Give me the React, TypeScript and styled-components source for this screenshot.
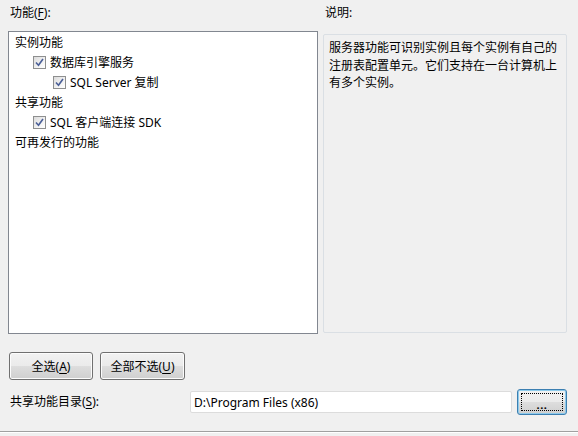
import styled, { createGlobalStyle } from 'styled-components'

type Feature = {
  label: string
  depth: number
  checkable: boolean
}

const features: Feature[] = [
  { label: '实例功能', depth: 0, checkable: false },
  { label: '数据库引擎服务', depth: 1, checkable: true },
  { label: 'SQL Server 复制', depth: 2, checkable: true },
  { label: '共享功能', depth: 0, checkable: false },
  { label: 'SQL 客户端连接 SDK', depth: 1, checkable: true },
  { label: '可再发行的功能', depth: 0, checkable: false },
]

const GlobalStyle = createGlobalStyle`
  html, body {
    margin: 0;
    padding: 0;
    background: #f0f0f0;
  }
  * {
    box-sizing: border-box;
  }
`

const Page = styled.div`
  width: 578px;
  height: 436px;
  padding: 0 11px 0 8px;
  background: #f0f0f0;
  color: #000;
  font-family: 'Noto Sans', 'Noto Sans CJK SC', sans-serif;
  font-size: 12px;
  display: flex;
  flex-direction: column;
  overflow: hidden;
`

const Columns = styled.div`
  display: grid;
  grid-template-columns: 310px 244px;
  column-gap: 5px;
`

const Column = styled.div`
  display: flex;
  flex-direction: column;
`

const Caption = styled.div<{ $indent?: number }>`
  height: 31px;
  padding-top: 4px;
  padding-left: ${({ $indent }) => $indent ?? 2}px;
  line-height: 18px;
`

const Key = styled.span`
  text-decoration: underline;
  text-underline-offset: 2px;
`

const Tree = styled.div`
  height: 303px;
  background: #fff;
  border: 1px solid #828790;
  display: flex;
  flex-direction: column;
`

const TreeRow = styled.div<{ $depth: number }>`
  height: 20px;
  display: flex;
  align-items: center;
  padding-left: ${({ $depth }) => ($depth === 0 ? 6 : 4 + $depth * 20)}px;
  white-space: nowrap;
`

const Box = styled.span`
  width: 13px;
  height: 13px;
  margin-right: 4px;
  border: 1px solid #8e8f8f;
  background: linear-gradient(135deg, #dcdcdc 0%, #f6f6f6 70%, #ffffff 100%);
  display: flex;
  align-items: center;
  justify-content: center;
  flex: none;
`

const Description = styled.div`
  margin-top: 3px;
  height: 299px;
  border: 1px solid #dadfe4;
  border-radius: 2px;
  padding: 4px 5px;
  line-height: 17.5px;
  background: #f0f0f0;
`

const ButtonRow = styled.div`
  margin-top: 18px;
  padding-left: 1px;
  display: flex;
  gap: 7px;
`

const Button = styled.button<{ $width: number; $height?: number; $focused?: boolean }>`
  width: ${({ $width }) => $width}px;
  height: ${({ $height }) => $height ?? 28}px;
  padding: 0;
  border: 1px solid ${({ $focused }) => ($focused ? '#3c7fb1' : '#707070')};
  border-radius: 3px;
  background: linear-gradient(#f2f2f2 0%, #ebebeb 48%, #dddddd 52%, #cfcfcf 100%);
  box-shadow: ${({ $focused }) => ($focused ? 'inset 0 0 0 1px #8ecbec' : 'inset 0 0 0 1px #fcfcfc')};
  font-family: inherit;
  font-size: 12px;
  color: #000;
  display: flex;
  align-items: center;
  justify-content: center;
`

const FocusRing = styled.span`
  width: calc(100% - 6px);
  height: calc(100% - 6px);
  border: 1px dotted #000;
  display: flex;
  align-items: center;
  justify-content: center;
  padding-top: 4px;
  font-size: 11px;
  font-weight: 700;
  letter-spacing: 0.5px;
`

const DirRow = styled.div`
  margin-top: 9px;
  height: 26px;
  display: flex;
  align-items: center;
`

const DirLabel = styled.div`
  width: 182px;
  padding-left: 2px;
  line-height: 18px;
`

const PathInput = styled.div`
  width: 322px;
  height: 22px;
  background: #fff;
  border: 1px solid #dcdcdc;
  border-radius: 2px;
  padding-left: 3px;
  display: flex;
  align-items: center;
  margin-right: 5px;
`

const Separator = styled.div`
  margin: 16px -11px 0 -8px;
  border-top: 1px solid #a0a0a0;
  border-bottom: 1px solid #fff;
`

function Check() {
  return (
    <Box>
      <svg width="9" height="9" viewBox="0 0 9 9">
        <path d="M1 4.5 L3.5 7.2 L8 1" fill="none" stroke="#4a5f97" strokeWidth="1.6" />
      </svg>
    </Box>
  )
}

export default function App() {
  return (
    <>
      <GlobalStyle />
      <Page>
        <Columns>
          <Column>
            <Caption>
              功能(<Key>F</Key>):
            </Caption>
            <Tree>
              {features.map(({ label, depth, checkable }) => (
                <TreeRow key={label} $depth={depth}>
                  {checkable && <Check />}
                  {label}
                </TreeRow>
              ))}
            </Tree>
          </Column>
          <Column>
            <Caption $indent={2}>说明:</Caption>
            <Description>
              服务器功能可识别实例且每个实例有自己的注册表配置单元。它们支持在一台计算机上有多个实例。
            </Description>
          </Column>
        </Columns>
        <ButtonRow>
          <Button $width={84}>
            全选(<Key>A</Key>)
          </Button>
          <Button $width={85}>
            全部不选(<Key>U</Key>)
          </Button>
        </ButtonRow>
        <DirRow>
          <DirLabel>
            共享功能目录(<Key>S</Key>):
          </DirLabel>
          <PathInput>D:\Program Files (x86)</PathInput>
          <Button $width={50} $height={26} $focused>
            <FocusRing>...</FocusRing>
          </Button>
        </DirRow>
        <Separator />
      </Page>
    </>
  )
}
